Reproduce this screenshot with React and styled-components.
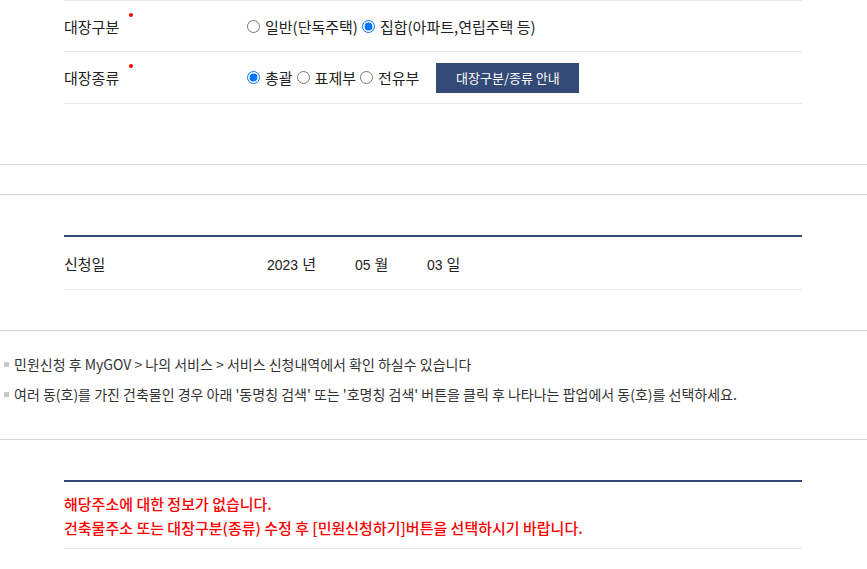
import React from 'react'
import styled, { createGlobalStyle } from 'styled-components';

const GlobalStyle = createGlobalStyle`
  * { box-sizing: border-box; }
  body {
    margin: 0;
    background: #fff;
    font-family: "Noto Sans CJK KR", "Noto Sans", sans-serif;
    color: #222;
  }
`;

const Page = styled.div`
  width: 867px;
  padding-bottom: 20px;
`;

const Inner = styled.div`
  margin: 0 65px 0 64px;
`;

const FormTable = styled.div`
  border-top-style: solid;
  border-top-width: ${p => (p.$strong ? '2px' : '1px')};
  border-top-color: ${p => (p.$strong ? '#2f4a78' : '#e8e8e8')};
`;

const Row = styled.div`
  display: flex;
  align-items: center;
  height: ${p => p.$h || 51}px;
  border-bottom: 1px solid #e8e8e8;
`;

const Label = styled.div`
  position: relative;
  width: ${p => p.$w || 183}px;
  flex-shrink: 0;
  font-size: 15px;
  color: #222;
`;

const Required = styled.span`
  position: absolute;
  left: 65px;
  top: -3px;
  width: 4px;
  height: 4px;
  border-radius: 50%;
  background: #ff0000;
`;

const Options = styled.div`
  display: flex;
  align-items: center;
  font-size: 15px;
  color: #222;
`;

const Option = styled.label`
  display: inline-flex;
  align-items: center;
  margin-right: 4px;
`;

const Radio = styled.input.attrs({ type: 'radio' })`
  width: 13px;
  height: 13px;
  margin: 0 5px 0 0;
`;

const GuideButton = styled.button`
  margin-left: 13px;
  width: 143px;
  height: 30px;
  border: 0;
  background: #344a76;
  color: #fff;
  font-family: inherit;
  font-size: 13px;
  cursor: pointer;
`;

const Spacer = styled.div`
  height: ${p => p.$h}px;
`;

const FullLine = styled.div`
  border-top: 1px solid #d6d6d6;
`;

const DateBox = styled.div`
  display: flex;
  align-items: center;
  font-family: "Liberation Sans", "Noto Sans CJK KR", sans-serif;
  font-size: 14px;
  color: #222;
`;

const DatePart = styled.span`
  width: ${p => p.$w}px;
  span {
    font-family: "Noto Sans CJK KR", sans-serif;
    font-size: 15px;
    margin-left: 4px;
  }
`;

const NoticeList = styled.ul`
  list-style: none;
  margin: 0;
  padding: 18px 0 30px 4px;
`;

const NoticeItem = styled.li`
  position: relative;
  padding-left: 10px;
  font-size: 14px;
  line-height: 30px;
  color: #333;
  &::before {
    content: '';
    position: absolute;
    left: 0;
    top: 13px;
    width: 5px;
    height: 5px;
    background: #c8c8c8;
  }
`;

const ErrorBox = styled.div`
  border-top: 2px solid #2f4a78;
  border-bottom: 1px solid #e8e8e8;
  padding: 10px 0 8px;
  color: #ff0000;
  font-size: 15px;
  font-weight: 500;
  line-height: 24px;
`;

function App() {
  return (
    <Page>
      <GlobalStyle />
      <Inner>
        <FormTable>
          <Row $h={51}>
            <Label>대장구분<Required /></Label>
            <Options>
              <Option><Radio name="kind" />일반(단독주택)</Option>
              <Option><Radio name="kind" defaultChecked />집합(아파트,연립주택 등)</Option>
            </Options>
          </Row>
          <Row $h={52}>
            <Label>대장종류<Required /></Label>
            <Options>
              <Option><Radio name="type" defaultChecked />총괄</Option>
              <Option><Radio name="type" />표제부</Option>
              <Option><Radio name="type" />전유부</Option>
              <GuideButton type="button">대장구분/종류 안내</GuideButton>
            </Options>
          </Row>
        </FormTable>
      </Inner>
      <Spacer $h={60} />
      <FullLine />
      <Spacer $h={29} />
      <FullLine />
      <Spacer $h={40} />
      <Inner>
        <FormTable $strong>
          <Row $h={53}>
            <Label $w={203}>신청일</Label>
            <DateBox>
              <DatePart $w={88}>2023<span>년</span></DatePart>
              <DatePart $w={72}>05<span>월</span></DatePart>
              <DatePart $w={40}>03<span>일</span></DatePart>
            </DateBox>
          </Row>
        </FormTable>
      </Inner>
      <Spacer $h={40} />
      <FullLine />
      <NoticeList>
        <NoticeItem>민원신청 후 MyGOV &gt; 나의 서비스 &gt; 서비스 신청내역에서 확인 하실수 있습니다</NoticeItem>
        <NoticeItem>여러 동(호)를 가진 건축물인 경우 아래 '동명칭 검색' 또는 '호명칭 검색' 버튼을 클릭 후 나타나는 팝업에서 동(호)를 선택하세요.</NoticeItem>
      </NoticeList>
      <FullLine />
      <Spacer $h={40} />
      <Inner>
        <ErrorBox>
          해당주소에 대한 정보가 없습니다.<br />
          건축물주소 또는 대장구분(종류) 수정 후 [민원신청하기]버튼을 선택하시기 바랍니다.
        </ErrorBox>
      </Inner>
    </Page>
  );
}

export default App;
